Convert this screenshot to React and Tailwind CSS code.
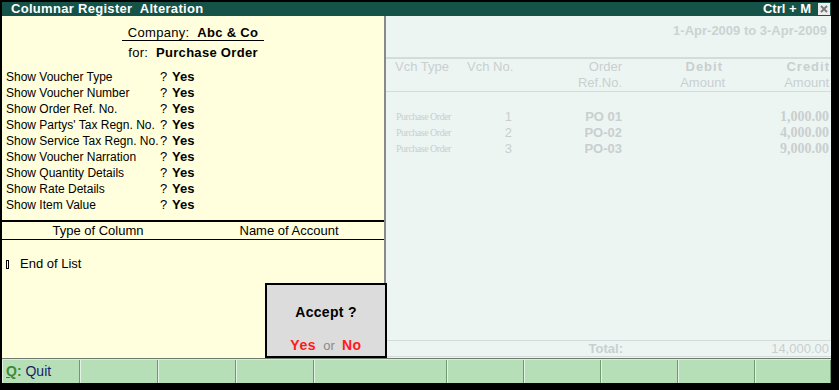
import React from "react";

const options = [
  "Show Voucher Type",
  "Show Voucher Number",
  "Show Order Ref. No.",
  "Show Partys' Tax Regn. No.",
  "Show Service Tax Regn. No.",
  "Show Voucher Narration",
  "Show Quantity Details",
  "Show Rate Details",
  "Show Item Value",
];

const rows = [
  { no: "1", ref: "PO 01", amt: "1,000.00" },
  { no: "2", ref: "PO-02", amt: "4,000.00" },
  { no: "3", ref: "PO-03", amt: "9,000.00" },
];

const footerWidths = [
  "w-[78px]", "w-[78px]", "w-[78px]", "w-[78px]", "w-[133px]",
  "w-[77px]", "w-[77px]", "w-[77px]", "w-[77px]", "flex-1",
];

export default function App() {
  return (
    <div className="w-[839px] h-[390px] bg-black pt-[2px] pl-[2px] pr-[8px] pb-[7px] font-['Liberation_Sans',Arial,sans-serif] text-[13px] overflow-hidden">
      <div className="flex flex-col h-full">
        {/* Title bar */}
        <div className="h-[14px] bg-[#155247] flex items-center justify-between pl-[9px] pr-[1px] text-white font-bold text-[13px] leading-[14px]">
          <span className="whitespace-pre tracking-[0.3px]">Columnar Register  Alteration</span>
          <div className="flex items-center gap-[7px]">
            <span className="whitespace-pre">Ctrl + M</span>
            <span className="w-[12px] h-[12px] bg-[#ececec] flex items-center justify-center">
              <svg width="8" height="8" viewBox="0 0 8 8">
                <path d="M1 1 L7 7 M7 1 L1 7" stroke="#7a7a7a" strokeWidth="2" />
              </svg>
            </span>
          </div>
        </div>

        {/* Body */}
        <div className="flex flex-1 min-h-0 relative">
          {/* Left panel */}
          <div className="w-[382px] bg-[#ffffdd] flex flex-col text-black">
            <div className="flex justify-center pt-[9px]">
              <div className="w-[142px] border-b border-black flex justify-center leading-[15px] whitespace-pre">
                <span className="tracking-[0.3px]">Company:  </span>
                <span className="font-bold tracking-[0.3px]">Abc &amp; Co</span>
              </div>
            </div>
            <div className="flex justify-center mt-[4px] leading-[16px] whitespace-pre">
              <span className="tracking-[0.3px]">for:  </span>
              <span className="font-bold tracking-[0.3px]">Purchase Order</span>
            </div>
            <div className="mt-[8px] pl-[4px] flex flex-col text-[12px]">
              {options.map((o) => (
                <div key={o} className="flex leading-[16px] whitespace-pre">
                  <span className="w-[154px]">{o}</span>
                  <span className="w-[12px] text-[13px]">?</span>
                  <span className="font-bold text-[13px]">Yes</span>
                </div>
              ))}
            </div>
            <div className="mt-[7px] h-[2px] bg-black" />
            <div className="flex leading-[17px]">
              <span className="w-[192px] text-center">Type of Column</span>
              <span className="flex-1 text-center">Name of Account</span>
            </div>
            <div className="h-[1px] bg-black" />
            <div className="mt-[16px] pl-[4px] flex items-center leading-[16px]">
              <span className="w-[3px] h-[9px] border border-black mr-[11px]" />
              <span>End of List</span>
            </div>
          </div>

          {/* Separator */}
          <div className="w-[2px] bg-[#8a8a8a]" />

          {/* Right panel */}
          <div className="flex-1 bg-[#edf5f3] flex flex-col text-[#c9cfcf]">
            <div className="mt-[7px] pr-[4px] text-right font-bold leading-[16px] text-[#ccd2d2]">
              1-Apr-2009 to 3-Apr-2009
            </div>
            <div className="mt-[18px] h-[2px] bg-[#d5dada]" />
            <div className="grid grid-cols-[74px_54px_110px_103px_104px] leading-[16px]">
              <span className="pl-[9px]">Vch Type</span>
              <span className="pl-[7px] whitespace-nowrap">Vch No.</span>
              <span className="text-right pr-[2px]">Order</span>
              <span className="text-right pr-[4px] font-bold tracking-[1px]">Debit</span>
              <span className="text-right pr-[1px] font-bold tracking-[1px]">Credit</span>
              <span />
              <span />
              <span className="text-right pr-[2px]">Ref.No.</span>
              <span className="text-right pr-[2px]">Amount</span>
              <span className="text-right pr-[2px]">Amount</span>
            </div>
            <div className="h-[1px] bg-[#d5dada]" />
            <div className="mt-[17px] grid grid-cols-[74px_54px_110px_103px_104px] leading-[16px]">
              {rows.map((r) => (
                <React.Fragment key={r.no}>
                  <span className="pl-[10px] text-[10px] font-['Liberation_Serif',serif] tracking-[-0.5px] whitespace-nowrap">Purchase Order</span>
                  <span className="text-right pr-[2px]">{r.no}</span>
                  <span className="text-right pr-[2px] font-bold">{r.ref}</span>
                  <span />
                  <span className="text-right pr-[2px] font-bold font-['Liberation_Serif',serif] text-[14px]">{r.amt}</span>
                </React.Fragment>
              ))}
            </div>
            <div className="mt-auto h-[1px] bg-[#d5dada]" />
            <div className="grid grid-cols-[74px_54px_110px_103px_104px] leading-[15px]">
              <span />
              <span />
              <span className="text-right pr-[1px] font-bold">Total:</span>
              <span />
              <span className="text-right pr-[2px]">14,000.00</span>
            </div>
            <div className="h-[1px] bg-[#d5dada] mb-[1px]" />
          </div>

          {/* Accept box overlay */}
          <div className="absolute left-[263px] top-[267px] w-[122px] h-[75px] bg-[#dcdcdc] border-2 border-black flex flex-col items-center text-[14px]">
            <div className="mt-[19px] font-bold leading-[16px] whitespace-pre tracking-[0.3px]">Accept ?</div>
            <div className="mt-auto mb-[2px] leading-[16px] whitespace-pre">
              <span className="text-[#ff1a1a] font-bold tracking-[0.5px]">Yes</span>
              <span className="text-[#8a8a8a] text-[13px]">  or  </span>
              <span className="text-[#ff1a1a] font-bold tracking-[0.5px]">No</span>
            </div>
          </div>
        </div>

        {/* Footer */}
        <div className="h-[1px] bg-[#6f7a6f]" />
        <div className="h-[24px] flex bg-[#b6dfb8] border-t border-[#d8eed8]">
          {footerWidths.map((w, i) => (
            <div
              key={i}
              className={`${w} h-full flex items-center border-r border-r-[#6f9a70] border-l border-l-[#e3f3e3]`}
            >
              {i === 0 && (
                <span className="pl-[3px] whitespace-pre text-[14px]">
                  <span className="text-[#3c8a3c] font-bold underline">Q</span>
                  <span className="text-[#3c8a3c] font-bold">:</span>
                  <span className="text-[#1c1c6a]"> Quit</span>
                </span>
              )}
            </div>
          ))}
        </div>
      </div>
    </div>
  );
}
